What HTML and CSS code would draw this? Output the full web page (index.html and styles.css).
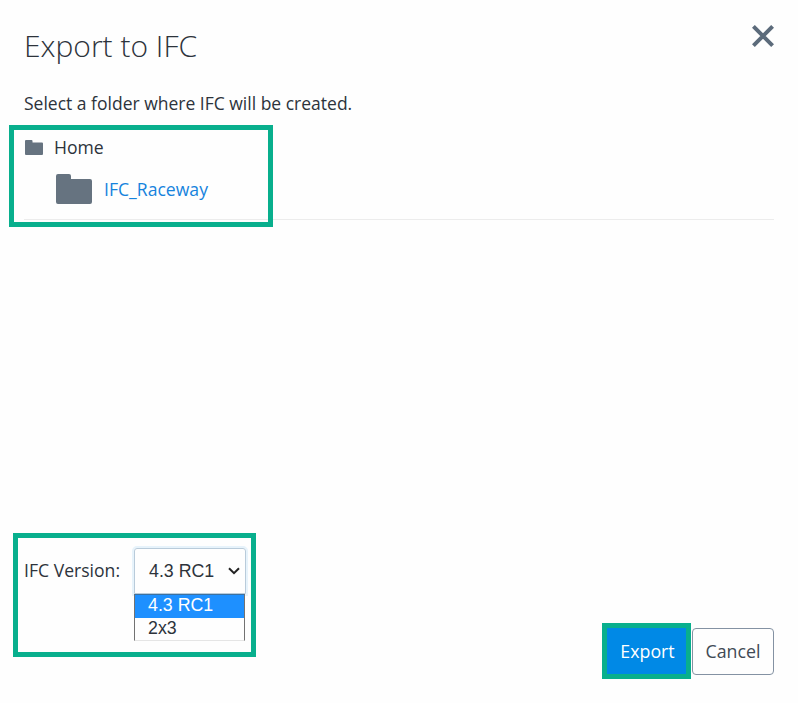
FILE: index.html
```html
<!DOCTYPE html>
<html lang="en">
<head>
<meta charset="utf-8">
<title>Export to IFC</title>
<link rel="stylesheet" href="styles.css">
</head>
<body>
<main class="dialog">
  <header class="header">
    <h1 class="title"><span>Export to IFC</span></h1>
    <button class="close" aria-label="Close">
      <svg width="22" height="22" viewBox="0 0 22 22"><path d="M1.4 1.4L20.6 20.6M20.6 1.4L1.4 20.6" stroke="#5c6b7b" stroke-width="4" fill="none"/></svg>
    </button>
  </header>
  <p class="hint"><span>Select a folder where IFC will be created.</span></p>
  <section class="tree">
    <div class="row root">
      <svg class="icon-small" viewBox="0 0 36 30" preserveAspectRatio="none"><path d="M2 0H13Q15 0 15 2V5H34Q36 5 36 7V28Q36 30 34 30H2Q0 30 0 28V2Q0 0 2 0Z"/></svg>
      <span>Home</span>
    </div>
    <div class="row child">
      <svg class="icon-large" viewBox="0 0 36 30"><path d="M2 0H13Q15 0 15 2V5H34Q36 5 36 7V28Q36 30 34 30H2Q0 30 0 28V2Q0 0 2 0Z"/></svg>
      <a class="link">IFC_Raceway</a>
    </div>
    <div class="highlight highlight-tree"></div>
  </section>
  <section class="version">
    <span class="label">IFC Version:</span>
    <div class="select">
      <div class="value"><span>4.3 RC1</span>
        <svg width="12" height="8" viewBox="0 0 12 8"><path d="M1 1.2L6 6.2L11 1.2" fill="none" stroke="#222" stroke-width="2"/></svg>
      </div>
      <div class="options">
        <div class="option selected">4.3 RC1</div>
        <div class="option">2x3</div>
      </div>
    </div>
    <div class="highlight highlight-version"></div>
  </section>
  <footer class="footer">
    <button class="button primary">Export</button>
    <button class="button">Cancel</button>
  </footer>
</main>
</body>
</html>
```
FILE: styles.css
```css
* { box-sizing: border-box; }
body { margin: 0; background: #fefefe; color: #2d333b; font: 17.6px/24px "Open Sans", sans-serif; }
.dialog { width: 798px; height: 703px; padding: 24px 24px 28px; display: flex; flex-direction: column; }
.header { display: flex; justify-content: space-between; height: 44px; }
.title { margin: 0; font-size: 30px; font-weight: 300; line-height: 44px; }
.close { width: 22px; height: 22px; margin-top: 1px; padding: 0; border: 0; background: none; }
.close svg { display: block; }
.hint { margin: 23px 0 0; font-size: 17.5px; }
.tree { position: relative; height: 105px; border-bottom: 1px solid #ececec; }
.row { display: flex; align-items: center; }
.root { height: 24px; margin-top: 20px; gap: 11px; }
.child { height: 30px; margin: 15px 0 0 32px; gap: 12px; }
.icon-small { width: 18px; height: 15px; margin-left: 1px; fill: #667380; }
.icon-large { width: 36px; height: 30px; fill: #667380; }
.link { color: #1683dd; }
.highlight { position: absolute; border: 5px solid #08af8d; pointer-events: none; }
.highlight-tree { left: -15px; top: 10px; width: 264px; height: 102px; }
.version { position: relative; display: flex; height: 94px; margin-top: auto; margin-bottom: -13px; }
.label { width: 110px; line-height: 46px; white-space: nowrap; }
.select { width: 112px; margin-top: 1px; font-family: "Liberation Sans", sans-serif; font-size: 17.8px; }
.value { height: 46px; border: 1px solid #b9cbda; border-radius: 3px 3px 0 0; box-shadow: 0 0 0 2px #e7f3fb; padding: 0 5px 0 14px; display: flex; align-items: center; justify-content: space-between; }
.options { position: relative; width: 111px; height: 47px; border: 1px solid #727272; border-top: 1px solid #3c71a0; border-bottom-color: #e5e5e5; background: #fefefe; }
.option { height: 23px; padding-left: 13px; line-height: 21px; }
.selected { color: #fff; background: #1e90ff; }
.highlight-version { left: -11px; top: -14px; width: 243px; height: 124px; }
.footer { display: flex; justify-content: flex-end; gap: 1px; margin-top: -5px; }
.button { width: 82px; height: 47px; margin-top: 5px; padding: 0 0 2px; border: 1px solid #8492a3; border-radius: 4px; background: #fefefe; color: #414a55; font: 17.8px/24px "Open Sans", sans-serif; }
.primary { width: 89px; height: 56px; margin: 0 0 -4px; padding: 0 0 0 2px; border: 5px solid #08af8d; border-radius: 0; background: #0089e6; color: #fff; }
```
